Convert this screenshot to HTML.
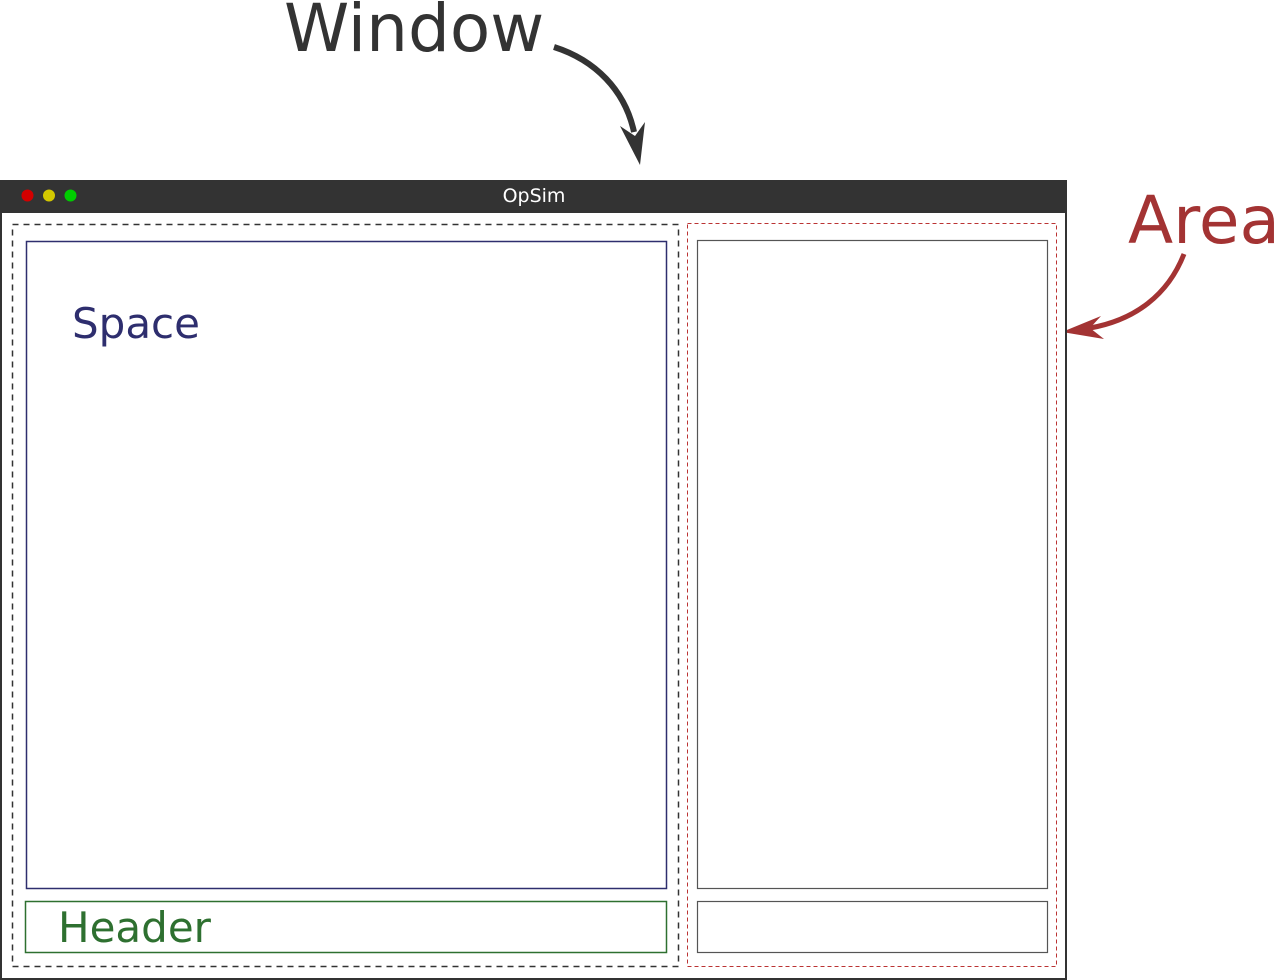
<!DOCTYPE html>
<html><head><meta charset="utf-8"><style>
html,body{margin:0;padding:0;background:#fff;width:1276px;height:980px;overflow:hidden}
svg{display:block}
text{font-family:"DejaVu Sans","Liberation Sans",sans-serif}
</style></head><body>
<svg width="1276" height="980" viewBox="0 0 1276 980">
<text x="284" y="51" font-size="66" fill="#333">Window</text>
<path d="M554,47 C595,60 625,90 634,132" fill="none" stroke="#333" stroke-width="6"/>
<path d="M620,126 L635,136 L645,122 L640,165 Z" fill="#333"/>
<text x="1128" y="243" font-size="66" fill="#a33333">Area</text>
<path d="M1184,254 C1168,295 1135,320 1090,328" fill="none" stroke="#a33333" stroke-width="5"/>
<path d="M1101,316 L1090,328 L1104,339 L1062,332 Z" fill="#a33333"/>
<rect x="1" y="181" width="1065" height="798" fill="#fff" stroke="#333" stroke-width="2"/>
<rect x="0" y="180" width="1067" height="33" fill="#333"/>
<circle cx="27.5" cy="195.5" r="6" fill="#d40000"/>
<circle cx="49" cy="195.5" r="6" fill="#d4c800"/>
<circle cx="70.5" cy="195.5" r="6" fill="#00cc00"/>
<text x="534" y="202" font-size="19" fill="#fff" text-anchor="middle">OpSim</text>
<rect x="12.5" y="224.5" width="666" height="742" fill="none" stroke="#333" stroke-width="1.5" stroke-dasharray="6,5"/>
<rect x="26.5" y="241.5" width="640" height="647" fill="none" stroke="#2e2e6e" stroke-width="1.5"/>
<text x="72" y="338" font-size="42" fill="#2e2e6e">Space</text>
<rect x="25.5" y="901.5" width="641" height="51" fill="none" stroke="#2e7030" stroke-width="1.5"/>
<text x="58" y="942" font-size="42" fill="#2e7030">Header</text>
<rect x="687.5" y="223.5" width="369" height="743" fill="none" stroke="#b33" stroke-width="1" stroke-dasharray="4,3"/>
<rect x="697.5" y="240.5" width="350" height="648" fill="none" stroke="#555" stroke-width="1.2"/>
<rect x="697.5" y="901.5" width="350" height="51" fill="none" stroke="#555" stroke-width="1.2"/>
</svg>
</body></html>
